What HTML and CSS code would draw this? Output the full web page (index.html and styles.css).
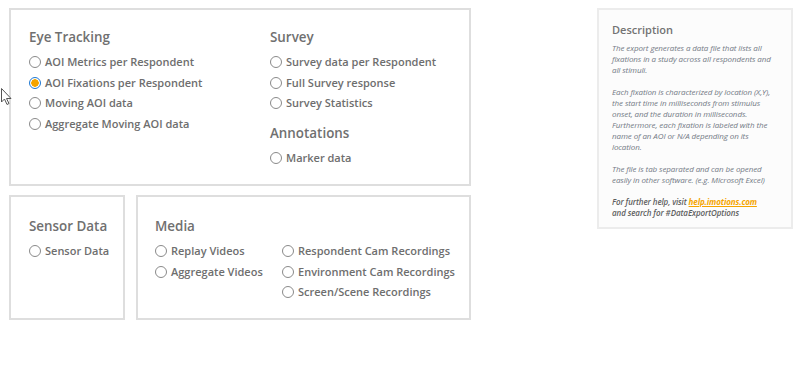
FILE: index.html
```html
<!DOCTYPE html>
<html lang="en">
<head>
  <meta charset="UTF-8">
  <title>Data Export</title>
  <link rel="stylesheet" href="styles.css">
</head>
<body>

<div class="page">
  <div class="options">
    <div class="box box-top">
      <div class="col col-eye">
        <h3>Eye Tracking</h3>
        <label class="radio"><span class="dot"></span>AOI Metrics per Respondent</label>
        <label class="radio checked"><span class="dot"></span>AOI Fixations per Respondent</label>
        <label class="radio"><span class="dot"></span>Moving AOI data</label>
        <label class="radio"><span class="dot"></span>Aggregate Moving AOI data</label>
      </div>
      <div class="col">
        <h3>Survey</h3>
        <label class="radio"><span class="dot"></span>Survey data per Respondent</label>
        <label class="radio"><span class="dot"></span>Full Survey response</label>
        <label class="radio"><span class="dot"></span>Survey Statistics</label>
        <h3 class="sub">Annotations</h3>
        <label class="radio"><span class="dot"></span>Marker data</label>
      </div>
    </div>

    <div class="row-bottom">
      <div class="box box-sensor">
        <h3>Sensor Data</h3>
        <label class="radio"><span class="dot"></span>Sensor Data</label>
      </div>
      <div class="box box-media">
        <h3>Media</h3>
        <div class="media-grid">
          <div class="col col-media">
            <label class="radio"><span class="dot"></span>Replay Videos</label>
            <label class="radio"><span class="dot"></span>Aggregate Videos</label>
          </div>
          <div class="col">
            <label class="radio"><span class="dot"></span>Respondent Cam Recordings</label>
            <label class="radio"><span class="dot"></span>Environment Cam Recordings</label>
            <label class="radio"><span class="dot"></span>Screen/Scene Recordings</label>
          </div>
        </div>
      </div>
    </div>
  </div>

  <div class="description">
    <h4>Description</h4>
    <p>The export generates a data file that lists all fixations in a study across all respondents and all stimuli.</p>
    <p>Each fixation is characterized by location (X,Y), the start time in milliseconds from stimulus onset, and the duration in milliseconds. Furthermore, each fixation is labeled with the name of an AOI or N/A depending on its location.</p>
    <p>The file is tab separated and can be opened easily in other software. (e.g. Microsoft Excel)</p>
    <p class="help">For further help, visit <a href="#">help.imotions.com</a><br>and search for #DataExportOptions</p>
  </div>
</div>

<svg class="cursor" width="12" height="18" viewBox="0 0 12 18">
  <path d="M0.5 0.5 L0.5 14 L3.5 11 L6 16.5 L8 15.5 L5.5 10.5 L10 10.5 Z" fill="#fff" stroke="#555" stroke-width="1"/>
</svg>

</body>
</html>
```

FILE: styles.css
```css
body {
  font-family: "Open Sans", "Noto Sans", sans-serif;
  background: #ffffff;
  color: #6a6a6a;
  margin: 0;
  padding: 0;
}
.page {
  display: flex;
  padding: 8px 7px 0 9px;
  gap: 126px;
}
.options {
  width: 462px;
}
.box {
  border: 2px solid #dedede;
  box-sizing: border-box;
}
.box-top {
  display: flex;
  height: 178px;
  padding: 17px 0 0 18px;
}
.col {
  display: flex;
  flex-direction: column;
}
.col-eye {
  width: 241px;
}
h3 {
  font-size: 13.4px;
  font-weight: 600;
  color: #707070;
  margin: 0 0 5px 0;
  line-height: 20px;
}
h3.sub {
  margin-top: 9px;
}
.radio {
  display: flex;
  align-items: center;
  font-size: 11px;
  font-weight: 600;
  line-height: 20.6px;
  color: #6e6e6e;
  white-space: nowrap;
}
.dot {
  width: 10px;
  height: 10px;
  border: 1px solid #8a8a8a;
  border-radius: 50%;
  margin-right: 4px;
  background: #fff;
  flex: none;
}
.radio.checked .dot {
  border-color: #1e78d2;
  background: radial-gradient(circle, #f5a400 0 3.5px, #fff 4px);
}
.row-bottom {
  display: flex;
  gap: 11px;
  margin-top: 9px;
}
.box-sensor {
  width: 116px;
  height: 125px;
  padding: 19px 0 0 18px;
}
.box-media {
  flex: 1;
  height: 125px;
  padding: 19px 0 0 17px;
}
.media-grid {
  display: flex;
}
.col-media {
  width: 127px;
}
.description {
  width: 196px;
  height: 221px;
  box-sizing: border-box;
  border: 2px solid #ececec;
  background: #fcfcfc;
  padding: 12px 12px 0 13px;
  font-size: 8px;
  line-height: 11px;
  color: #737a85;
}
.description h4 {
  font-size: 11px;
  font-weight: 600;
  color: #737373;
  margin: 0 0 5px 0;
  line-height: 15px;
}
.description p {
  font-style: italic;
  font-weight: 400;
  letter-spacing: -0.1px;
  margin: 0 0 11px 0;
}
.description .help {
  color: #5e5e5e;
  font-weight: 600;
}
.description a {
  color: #f5a400;
  font-weight: 700;
}
.cursor {
  position: absolute;
  left: 1px;
  top: 88px;
}
```
